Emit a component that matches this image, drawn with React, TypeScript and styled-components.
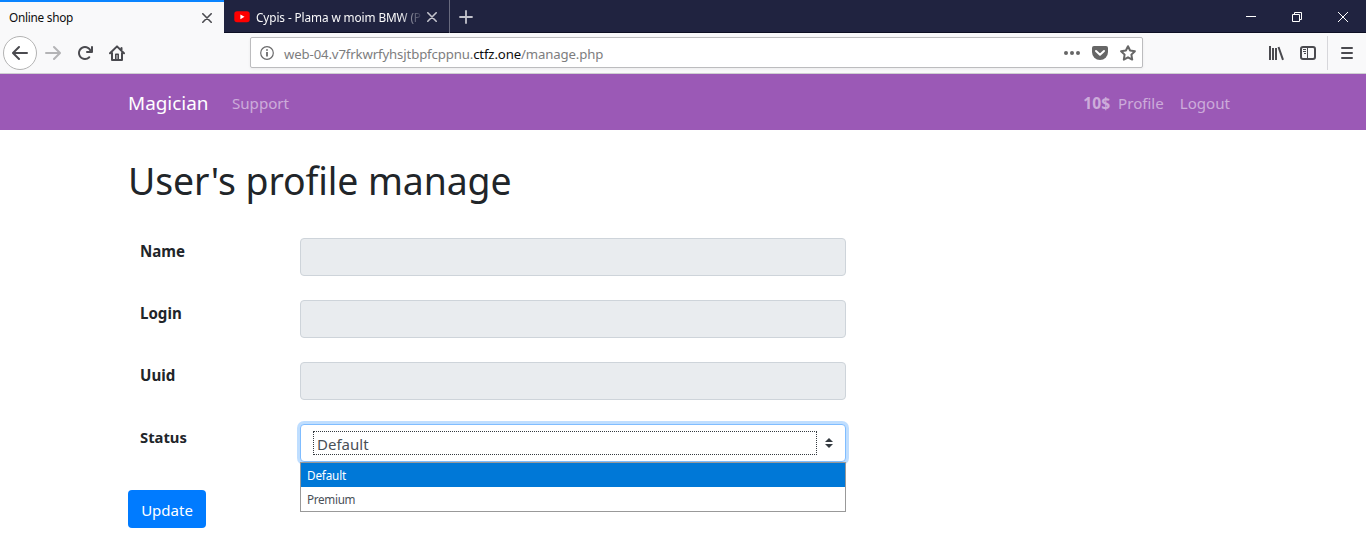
import React from "react";
import styled, { createGlobalStyle } from "styled-components";

const GlobalStyle = createGlobalStyle`
  * { box-sizing: border-box; }
  body {
    margin: 0;
    background: #fff;
    color: #212529;
    font-family: "Noto Sans", "Open Sans", sans-serif;
    overflow: hidden;
  }
  svg { display: block; flex: none; }
`;

const Label = styled.span<{ $size: number; $track?: number; $dy?: number }>`
  font-size: ${(p) => p.$size}px;
  letter-spacing: ${(p) => p.$track ?? 0}px;
  margin-top: ${(p) => p.$dy ?? 0}px;
  white-space: nowrap;
`;

/* Browser chrome */
const TabStrip = styled.div`
  display: flex;
  height: 33px;
  background: #202340;
  box-shadow: inset 0 -1px 0 #0d0f24;
`;
const Tab = styled.div<{ $active?: boolean }>`
  display: flex;
  align-items: center;
  width: ${(p) => (p.$active ? 224 : 226)}px;
  padding: ${(p) => (p.$active ? "0 9px 0 9px" : "1px 10px 0 10px")};
  color: ${(p) => (p.$active ? "#0c0c0d" : "#f9f9fa")};
  background: ${(p) => (p.$active ? "#f9f9fa" : "transparent")};
  border-top: ${(p) => (p.$active ? "2px solid #0a84ff" : "0")};
  border-right: ${(p) => (p.$active ? "0" : "1px solid #686a7e")};
`;
const TabTitle = styled.div<{ $fade?: boolean }>`
  flex: 1;
  display: flex;
  margin-right: 4px;
  ${(p) => p.$fade && "mask-image: linear-gradient(to right, #000 144px, rgba(0, 0, 0, 0.45) 156px, rgba(0, 0, 0, 0.1) 165px);"}
`;
const Favicon = styled.div`
  margin-right: 6px;
`;
const NewTab = styled.div`
  display: grid;
  place-items: center;
  width: 32px;
`;
const WindowControls = styled.div`
  display: flex;
  margin-left: auto;
`;
const WindowButton = styled.div`
  display: grid;
  place-items: center;
  width: 46px;
`;
const Toolbar = styled.div`
  display: flex;
  align-items: center;
  height: 41px;
  padding: 0 0 1px 3px;
  background: #f9f9fa;
  border-bottom: 1px solid #cfcfd1;
`;
const BackButton = styled.div`
  display: grid;
  place-items: center;
  width: 34px;
  height: 34px;
  border: 1px solid #b3b3b3;
  border-radius: 50%;
  background: #fff;
`;
const ToolButton = styled.div<{ $width?: number }>`
  display: grid;
  place-items: center;
  width: ${(p) => p.$width ?? 32}px;
  height: 32px;
`;
const UrlBar = styled.div`
  display: flex;
  align-items: center;
  flex: none;
  width: 893px;
  height: 31px;
  margin-left: 117px;
  margin-right: 117px;
  padding: 0 6px 0 9px;
  background: #fff;
  border: 1px solid #bcbcbe;
  border-radius: 2px;
  box-shadow: 0 1px 3px rgba(0, 0, 0, 0.06);
`;
const UrlText = styled.div`
  display: flex;
  flex: 1;
  margin-left: 10px;
  color: #7d7d7e;
`;
const Host = styled.b`
  color: #0c0c0d;
  font-weight: 400;
`;
const UrlActions = styled.div`
  display: flex;
  align-items: center;
  gap: 12px;
`;
const ToolDivider = styled.div`
  width: 1px;
  height: 34px;
  margin-left: 3px;
  background: #d7d7db;
`;

/* Site */
const Navbar = styled.nav`
  display: flex;
  align-items: center;
  height: 56px;
  padding: 0 136px 0 128px;
  background: #9b59b6;
  color: rgba(255, 255, 255, 0.5);
`;
const Brand = styled.div`
  display: flex;
  width: 104px;
  color: #fff;
`;
const NavRight = styled.div`
  display: flex;
  margin-left: auto;
`;
const Balance = styled.b`
  display: flex;
  margin-right: 8px;
`;
const NavLink = styled.div`
  display: flex;
  & + & { margin-left: 16px; }
`;
const Content = styled.main`
  padding: 24px 128px 0;
`;
const Title = styled.h1`
  display: flex;
  align-items: center;
  height: 54px;
  margin: 0 0 18px;
  font-weight: 400;
  line-height: 48px;
`;
const Row = styled.div`
  display: grid;
  grid-template-columns: 160px 546px;
  height: 62px;
  padding: 12px;
`;
const RowLabel = styled.div`
  display: flex;
  font-weight: 700;
  line-height: 24px;
  padding-top: 1px;
`;
const Field = styled.div`
  height: 38px;
  background: #e9ecef;
  border: 1px solid #ced4da;
  border-radius: 4px;
`;
const Select = styled.div`
  position: relative;
  display: flex;
  align-items: center;
  justify-content: space-between;
  height: 38px;
  padding: 0 12px;
  background: #fff;
  border: 1px solid #80bdff;
  border-radius: 4px;
  box-shadow: 0 0 0 3px rgba(0, 123, 255, 0.25);
`;
const SelectValue = styled.div`
  display: flex;
  align-items: center;
  width: 504px;
  height: 24px;
  padding-left: 3px;
  border: 1px dotted #343a40;
  color: #495057;
`;
const Menu = styled.div`
  position: absolute;
  top: 37px;
  left: -1px;
  width: 546px;
  background: #fff;
  border: 1px solid #999;
`;
const Option = styled.div<{ $selected?: boolean }>`
  display: flex;
  align-items: center;
  height: 24px;
  padding-left: 6px;
  color: ${(p) => (p.$selected ? "#fff" : "#495057")};
  background: ${(p) => (p.$selected ? "#0078d7" : "#fff")};
`;
const Button = styled.button`
  display: flex;
  align-items: center;
  justify-content: center;
  width: 78px;
  height: 38px;
  margin-top: 16px;
  padding: 0;
  border: 0;
  border-radius: 4px;
  background: #007bff;
  color: #fff;
  font-family: inherit;
`;

const CloseIcon = ({ color }: { color: string }) => (
  <svg width="10" height="10" viewBox="0 0 10 10" fill="none" stroke={color} strokeWidth="1.6" strokeLinecap="round">
    <path d="M.8.8l8.4 8.4M9.2.8L.8 9.2" />
  </svg>
);
const ArrowIcon = ({ flip, color }: { flip?: boolean; color: string }) => (
  <svg width="16" height="16" viewBox="0 0 16 16" fill={color}>
    <path
      transform={flip ? "matrix(-1 0 0 1 16 0)" : undefined}
      d="M15 7H3.414l4.293-4.293a1 1 0 0 0-1.414-1.414l-6 6a1 1 0 0 0 0 1.414l6 6a1 1 0 0 0 1.414-1.414L3.414 9H15a1 1 0 0 0 0-2z"
    />
  </svg>
);
const ReloadIcon = () => (
  <svg width="16" height="16" viewBox="0 0 16 16" fill="#4a4a4f">
    <path d="M15 1a1 1 0 0 0-1 1v2.418A6.995 6.995 0 1 0 8 15a6.954 6.954 0 0 0 4.95-2.05 1 1 0 0 0-1.414-1.414A5.019 5.019 0 1 1 12.549 6H10a1 1 0 0 0 0 2h5a1 1 0 0 0 1-1V2a1 1 0 0 0-1-1z" />
  </svg>
);
const HomeIcon = () => (
  <svg width="16" height="16" viewBox="0 0 16 16" fill="none" stroke="#4a4a4f" strokeWidth="2" strokeLinecap="round" strokeLinejoin="round">
    <path d="M1 8.3L8 1.4l7 6.9M3 8v7h10V8M12.5 3v2" />
    <path d="M6.8 14.5V9.200h2.400v5.300" strokeWidth="1.6" />
  </svg>
);
const YoutubeIcon = () => (
  <svg width="16" height="12" viewBox="0 0 16 12">
    <rect x="0.3" y="0.3" width="15.4" height="11" rx="2.8" fill="#f00" />
    <path d="M6.4 3.4v4.8l4.1-2.4z" fill="#fff" />
  </svg>
);
const InfoIcon = () => (
  <svg width="14" height="14" viewBox="0 0 14 14" fill="none" stroke="#6b6b6c">
    <circle cx="7" cy="7" r="6.3" strokeWidth="1.2" />
    <path d="M7 6v4.6M7 3.3v1.5" strokeWidth="1.8" />
  </svg>
);
const DotsIcon = () => (
  <svg width="16" height="16" viewBox="0 0 16 16" fill="#666">
    <circle cx="2" cy="8" r="2" />
    <circle cx="8" cy="8" r="2" />
    <circle cx="14" cy="8" r="2" />
  </svg>
);
const PocketIcon = () => (
  <svg width="16" height="16" viewBox="0 0 16 16">
    <path d="M2 1h12a2 2 0 0 1 2 2v4a8 8 0 0 1-16 0V3a2 2 0 0 1 2-2z" fill="#666" />
    <path d="M4 6l4 3.8L12 6" fill="none" stroke="#fff" strokeWidth="2" strokeLinecap="round" strokeLinejoin="round" />
  </svg>
);
const StarIcon = () => (
  <svg width="16" height="16" viewBox="0 0 16 16" fill="none" stroke="#666" strokeWidth="2" strokeLinejoin="round">
    <path d="M8 1.2l2.1 4.3 4.8.7-3.5 3.4.8 5L8 12.3l-4.2 2.3.8-5L1.1 6.2l4.8-.7z" />
  </svg>
);
const LibraryIcon = () => (
  <svg width="16" height="16" viewBox="0 0 16 16" fill="none" stroke="#4a4a4f" strokeWidth="2">
    <path d="M2 1v14M5 3v12M8 3v12M10.5 2l4.500 12.800" />
  </svg>
);
const SidebarIcon = () => (
  <svg width="16" height="16" viewBox="0 0 16 16" fill="none" stroke="#4a4a4f">
    <rect x="1" y="2" width="14" height="12" rx="2" strokeWidth="2" />
    <path d="M7.5 2v12" strokeWidth="1" />
    <path d="M3 4.5h3M3 6.5h3M4 8.5h2" strokeWidth="1" />
  </svg>
);
const MenuIcon = () => (
  <svg width="12" height="14" viewBox="0 0 12 14" stroke="#4a4a4f" strokeWidth="2" strokeLinecap="round">
    <path d="M1 2h10M1 7h10M1 12h10" />
  </svg>
);
const PlusIcon = () => (
  <svg width="14" height="14" viewBox="0 0 14 14" stroke="#c3c3cc" strokeWidth="1.8" strokeLinecap="round">
    <path d="M7 1v12M1 7h12" />
  </svg>
);
const CaretsIcon = () => (
  <svg width="8" height="10" viewBox="0 0 8 10" fill="#343a40">
    <path d="M0 4l4-4 4 4zM0 6h8l-4 4z" />
  </svg>
);

export default function App() {
  return (
    <>
      <GlobalStyle />
      <TabStrip>
        <Tab $active>
          <TabTitle>
            <Label $size={11.8} $track={-0.26} $dy={-2}>Online shop</Label>
          </TabTitle>
          <ToolButton $width={16}><CloseIcon color="#4a4a4f" /></ToolButton>
        </Tab>
        <Tab>
          <Favicon><YoutubeIcon /></Favicon>
          <TabTitle $fade>
            <Label $size={11.8} $track={-0.1}>Cypis - Plama w moim BMW (P</Label>
          </TabTitle>
          <ToolButton $width={16}><CloseIcon color="#c3c3cc" /></ToolButton>
        </Tab>
        <NewTab><PlusIcon /></NewTab>
        <WindowControls>
          <WindowButton>
            <svg width="10" height="10" viewBox="0 0 10 10" stroke="#fff"><path d="M0 4.5h10" /></svg>
          </WindowButton>
          <WindowButton>
            <svg width="10" height="10" viewBox="0 0 10 10" fill="none" stroke="#fff"><path d="M.5 2.5h7v7h-7zM2.5 2.5v-2h7v7h-2" /></svg>
          </WindowButton>
          <WindowButton>
            <svg width="10" height="10" viewBox="0 0 10 10" stroke="#fff"><path d="M0 0l10 10M10 0L0 10" /></svg>
          </WindowButton>
        </WindowControls>
      </TabStrip>
      <Toolbar>
        <BackButton><ArrowIcon color="#4a4a4f" /></BackButton>
        <ToolButton><ArrowIcon flip color="#b4b4b6" /></ToolButton>
        <ToolButton><ReloadIcon /></ToolButton>
        <ToolButton><HomeIcon /></ToolButton>
        <UrlBar>
          <InfoIcon />
          <UrlText>
            <Label $size={13.2} $track={-0.13} $dy={3}>
              web-04.v7frkwrfyhsjtbpfcppnu.<Host>ctfz.one</Host>/manage.php
            </Label>
          </UrlText>
          <UrlActions>
            <DotsIcon />
            <PocketIcon />
            <StarIcon />
          </UrlActions>
        </UrlBar>
        <ToolButton><LibraryIcon /></ToolButton>
        <ToolButton><SidebarIcon /></ToolButton>
        <ToolDivider />
        <ToolButton $width={38}><MenuIcon /></ToolButton>
      </Toolbar>

      <Navbar>
        <Brand><Label $size={18.9} $dy={2}>Magician</Label></Brand>
        <NavLink><Label $size={15.1} $dy={2}>Support</Label></NavLink>
        <NavRight>
          <Balance><Label $size={15.6} $dy={1}>10$</Label></Balance>
          <NavLink><Label $size={15.1} $dy={2}>Profile</Label></NavLink>
          <NavLink><Label $size={15.1} $dy={2}>Logout</Label></NavLink>
        </NavRight>
      </Navbar>
      <Content>
        <Title><Label $size={37.4} $track={-0.1}>User's profile manage</Label></Title>
        {["Name", "Login", "Uuid"].map((name) => (
          <Row key={name}>
            <RowLabel><Label $size={15.1}>{name}</Label></RowLabel>
            <Field />
          </Row>
        ))}
        <Row>
          <RowLabel><Label $size={14.8}>Status</Label></RowLabel>
          <Select>
            <SelectValue><Label $size={15} $dy={2}>Default</Label></SelectValue>
            <CaretsIcon />
            <Menu>
              <Option $selected><Label $size={11.7} $track={-0.15}>Default</Label></Option>
              <Option><Label $size={11.7} $track={-0.3}>Premium</Label></Option>
            </Menu>
          </Select>
        </Row>
        <Button><Label $size={15} $dy={2}>Update</Label></Button>
      </Content>
    </>
  );
}
